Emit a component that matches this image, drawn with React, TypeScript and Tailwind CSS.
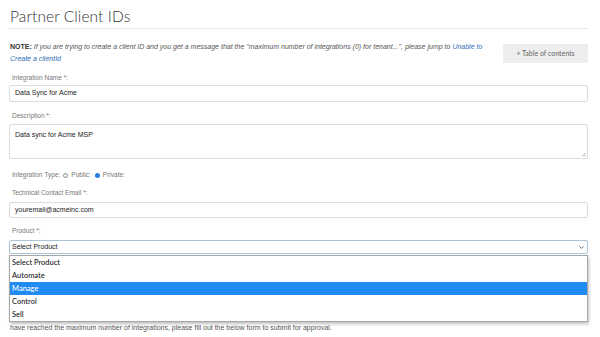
import { ChevronDown } from "lucide-react";

const products = ["Select Product", "Automate", "Manage", "Control", "Sell"];

export default function App() {
    return (
        <div className="w-[600px] h-[337px] overflow-hidden bg-white font-['Liberation_Sans',Arial,sans-serif] text-[#333]">
            <div className="pl-[9px] pr-[12px]">
                {/* Title */}
                <div className="pt-[6px] pb-[2px] border-b border-[#e6e6e6]">
                    <h1 className="pl-[1px] text-[15.5px] leading-[20px] font-light font-['Lato',sans-serif] text-[#333] tracking-[0.1px]">
                        Partner Client IDs
                    </h1>
                </div>

                {/* Note + table of contents */}
                <div className="mt-[12px] flex items-start justify-between">
                    <p className="pl-[1px] w-[484px] text-[7px] leading-[12px] text-[#555]">
                        <span className="font-bold text-[#333] mr-[2px]">NOTE:</span>
                        <span className="italic">
                            If you are trying to create a client ID and you get a message that the "maximum number of
                            integrations (0) for tenant...", please jump to{" "}
                        </span>
                        <span className="italic text-[#2d6db5]">Unable to Create a clientId</span>
                    </p>
                    <div className="mt-[3px] w-[85px] h-[19px] bg-[#eeeeee] flex items-center justify-center text-[7px] text-[#666] font-['Lato',sans-serif]">
                        + Table of contents
                    </div>
                </div>

                {/* Form */}
                <div className="relative">
                    <label className="block mt-[8px] pl-[3px] text-[6.5px] leading-[10px] text-[#777]">Integration Name *:</label>
                    <div className="mt-[2px] h-[17px] border border-[#dcdcdc] rounded-[2px] pl-[5px] flex items-center text-[7px] text-[#222]">
                        Data Sync for Acme
                    </div>

                    <label className="block mt-[9px] pl-[3px] text-[6.5px] leading-[10px] text-[#777]">Description *:</label>
                    <div className="relative mt-[3px] h-[35px] border border-[#dcdcdc] rounded-[2px] pl-[5px] pt-[5px] text-[7px] leading-[10px] text-[#222]">
                        Data sync for Acme MSP
                        <svg className="absolute right-[1px] bottom-[1px]" width="5" height="5" viewBox="0 0 5 5">
                            <path d="M4.5 1 L1 4.5 M4.5 3 L3 4.5" stroke="#999" strokeWidth="0.7" />
                        </svg>
                    </div>

                    <div className="mt-[11px] pl-[3px] h-[10px] flex items-center text-[6.5px] text-[#777]">
                        <span>Integration Type:</span>
                        <span className="ml-[3px] w-[5px] h-[5px] rounded-full border border-[#888] bg-white" />
                        <span className="ml-[3px]">Public:</span>
                        <span className="ml-[4px] w-[5px] h-[5px] rounded-full bg-[#2a7de1]" />
                        <span className="ml-[3px]">Private:</span>
                    </div>

                    <label className="block mt-[8px] pl-[3px] text-[6.5px] leading-[10px] text-[#777]">Technical Contact Email *:</label>
                    <div className="mt-[4px] h-[16px] border border-[#dcdcdc] rounded-[2px] pl-[5px] flex items-center text-[7px] text-[#222]">
                        youremail@acmeinc.com
                    </div>

                    <label className="block mt-[8px] pl-[3px] text-[6.5px] leading-[10px] text-[#777]">Product *:</label>
                    <div className="mt-[4px] h-[14px] border border-[#a9c4d6] rounded-[2px] pl-[2px] pr-[2px] flex items-center justify-between text-[7px] text-[#222]">
                        <span>Select Product</span>
                        <ChevronDown size={7} strokeWidth={3} className="text-[#555]" />
                    </div>

                    {/* open dropdown list */}
                    <div className="absolute left-0 right-0 top-[182px] bg-white border border-[#a6a6a6] shadow-[1px_2px_3px_rgba(0,0,0,0.25)] z-10">
                        {products.map((p) => (
                            <div
                                key={p}
                                className={`h-[13px] pl-[2px] flex items-center text-[7.5px] font-['Lato',sans-serif] font-medium ${
                                    p === "Manage" ? "bg-[#1f8bf3] text-white" : "text-[#222]"
                                }`}
                            >
                                {p}
                            </div>
                        ))}
                    </div>

                    <p className="mt-[68px] pl-[1px] text-[7px] leading-[12px] text-[#555]">
                        have reached the maximum number of integrations, please fill out the below form to submit for approval.
                    </p>
                </div>
            </div>
        </div>
    );
}
